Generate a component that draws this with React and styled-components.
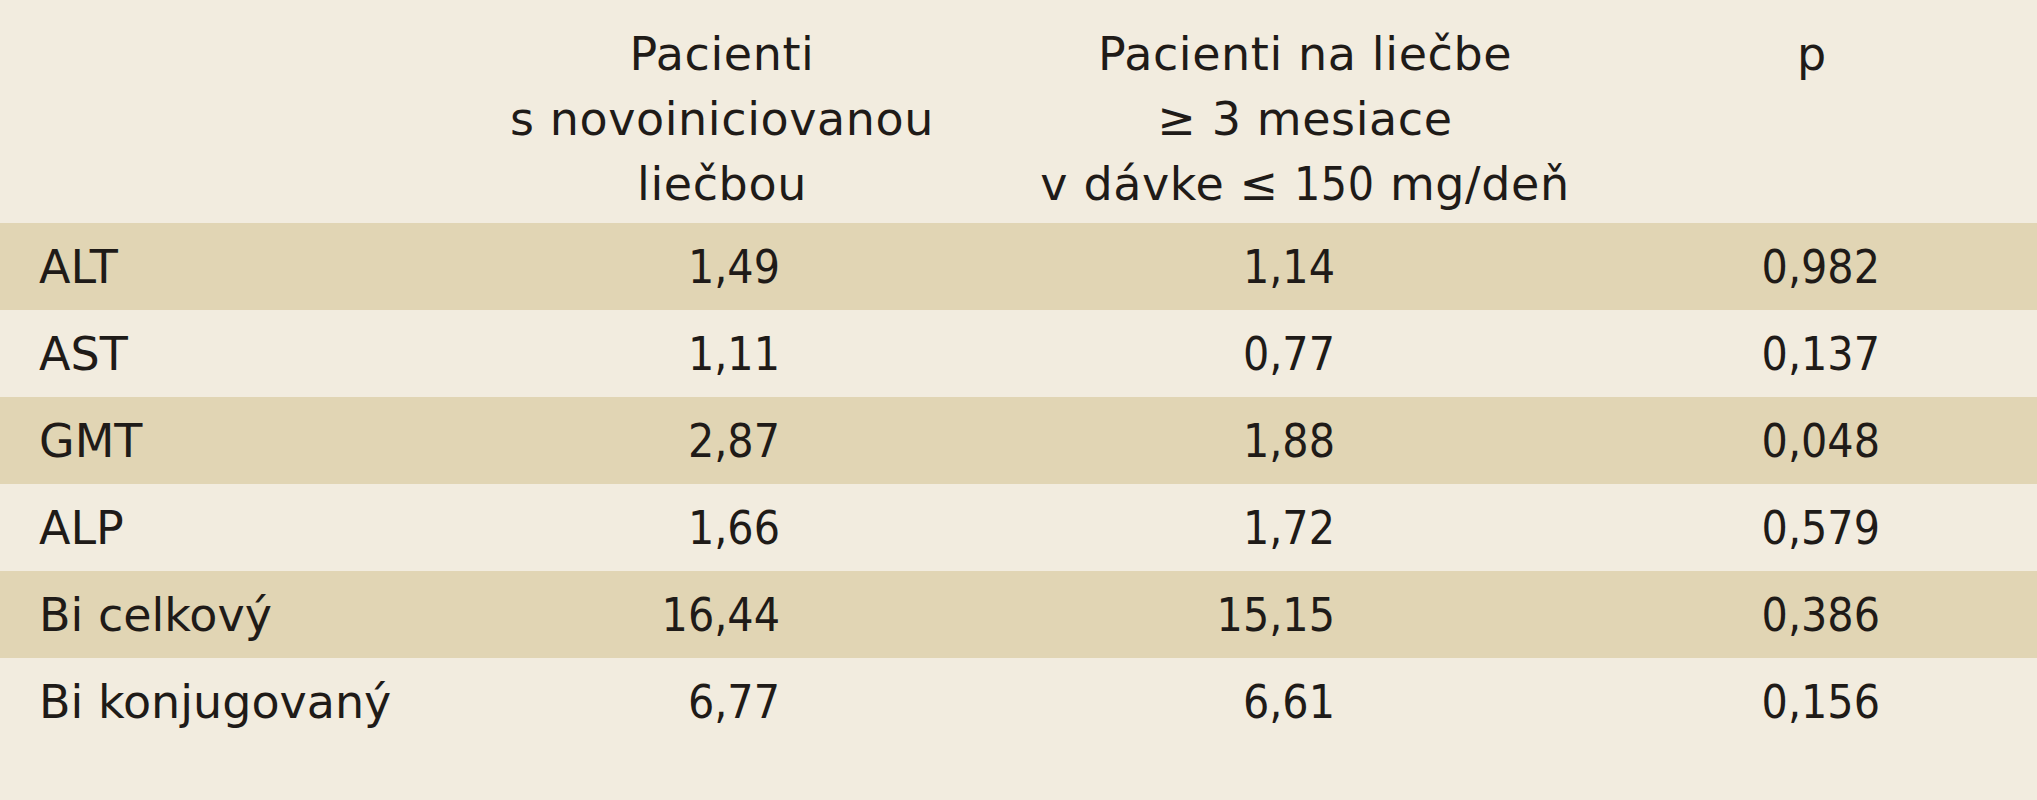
import React from 'react';
import styled, { createGlobalStyle } from 'styled-components';

const GlobalStyle = createGlobalStyle`
  html, body {
    margin: 0;
    padding: 0;
    background: #f2ecdf;
  }
  body {
    font-family: "DejaVu Sans", sans-serif;
    color: #1f1b18;
  }
`;

const Page = styled.div`
  width: 2037px;
  height: 800px;
  background: #f2ecdf;
  overflow: hidden;
`;

const Table = styled.div`
  display: grid;
  grid-template-columns: 470px 504px 662px 352px 1fr;
`;

const HeadCell = styled.div`
  padding: 22px 0 6px;
  height: 223px;
  box-sizing: border-box;
  font-size: 46px;
  line-height: 65px;
  letter-spacing: 0.6px;
  text-align: center;
  white-space: nowrap;
`;

const Num = styled.span`
  font-family: "DejaVu Sans Condensed", "DejaVu Sans", sans-serif;
  font-stretch: condensed;
`;

const Cell = styled.div`
  height: 87px;
  display: flex;
  align-items: center;
  justify-content: ${p => (p.$label ? 'flex-start' : 'flex-end')};
  padding-left: ${p => (p.$label ? '39px' : '0')};
  padding-right: ${p => p.$pr || 0}px;
  background: ${p => (p.$shade ? '#e1d5b4' : 'transparent')};
  font-size: 46px;
  white-space: nowrap;
`;

const columns = [
  { pr: 194 },
  { pr: 301 },
  { pr: 108 },
];

const rows = [
  ['ALT', '1,49', '1,14', '0,982'],
  ['AST', '1,11', '0,77', '0,137'],
  ['GMT', '2,87', '1,88', '0,048'],
  ['ALP', '1,66', '1,72', '0,579'],
  ['Bi celkový', '16,44', '15,15', '0,386'],
  ['Bi konjugovaný', '6,77', '6,61', '0,156'],
];

export default function App() {
  return (
    <Page>
      <GlobalStyle />
      <Table>
        <HeadCell />
        <HeadCell>Pacienti<br />s novoiniciovanou<br />liečbou</HeadCell>
        <HeadCell>Pacienti na liečbe<br />≥ 3 mesiace<br />v dávke ≤ <Num>150</Num> mg/deň</HeadCell>
        <HeadCell>p</HeadCell>
        <HeadCell />
        {rows.map((r, i) => (
          <React.Fragment key={r[0]}>
            <Cell $label $shade={i % 2 === 0}>{r[0]}</Cell>
            {columns.map((c, j) => (
              <Cell key={j} $pr={c.pr} $shade={i % 2 === 0}>
                <Num>{r[j + 1]}</Num>
              </Cell>
            ))}
            <Cell $shade={i % 2 === 0} />
          </React.Fragment>
        ))}
      </Table>
    </Page>
  );
}
